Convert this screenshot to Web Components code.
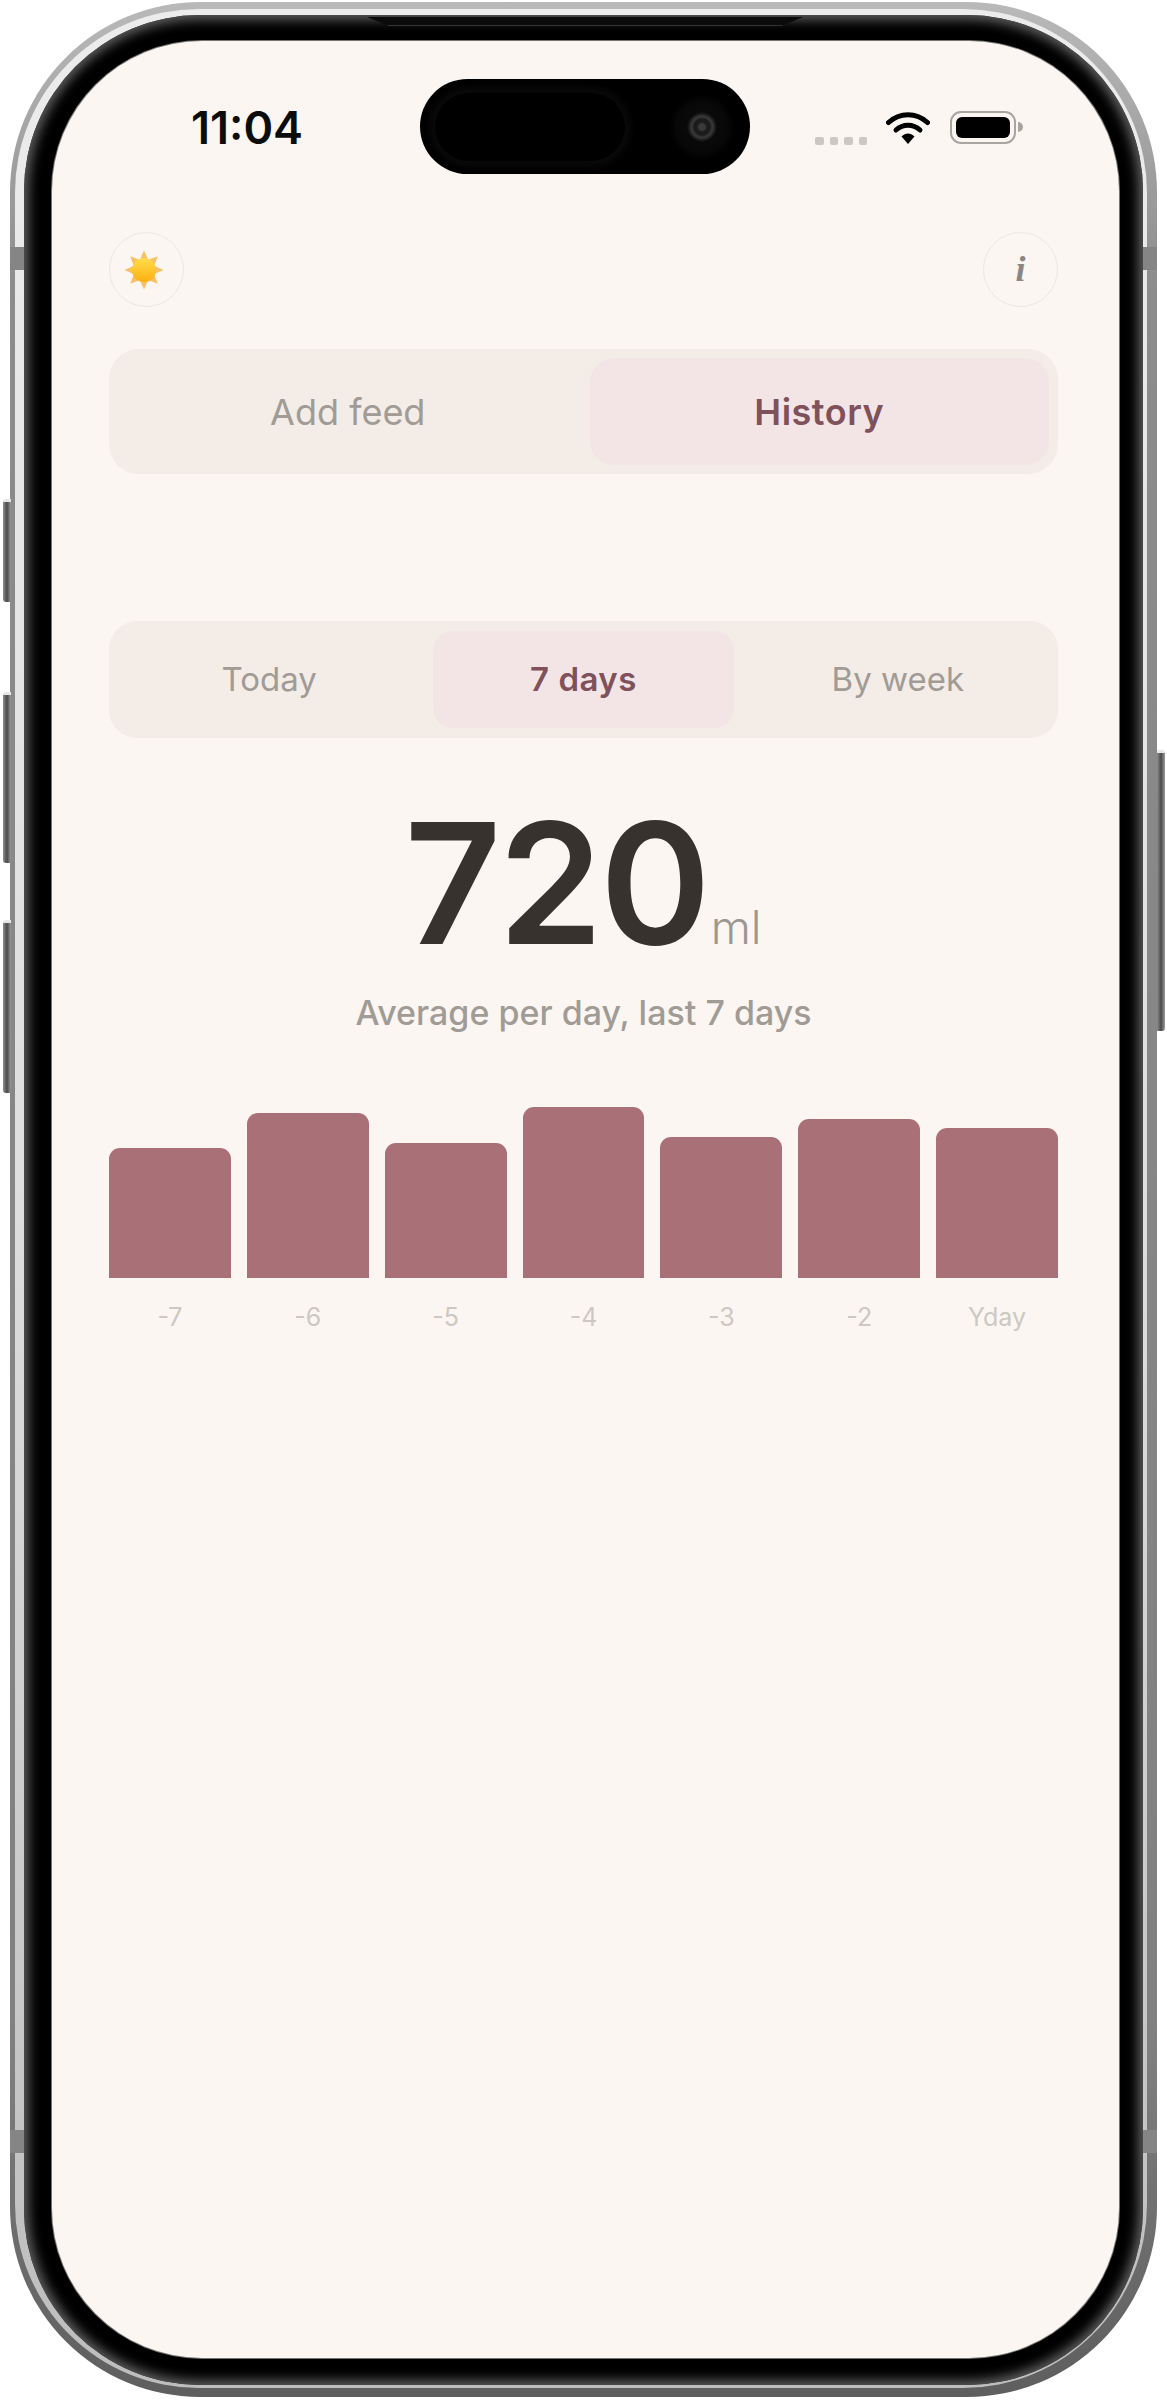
<!doctype html>
<html lang="en">
<head>
<meta charset="utf-8">
<title>Feed history</title>
<style>
  html, body { margin: 0; background: #fff; }
  body { font-family: Inter, "Noto Sans", sans-serif; }
</style>
</head>
<body>
<phone-frame>
  <status-bar time="11:04"></status-bar>
  <app-toolbar></app-toolbar>
  <segment-control variant="large" items="Add feed|History" active="1"></segment-control>
  <segment-control variant="small" items="Today|7 days|By week" active="1"></segment-control>
  <stat-readout value="720" unit="ml" caption="Average per day, last 7 days"></stat-readout>
  <bar-chart data="-7:130,-6:165,-5:135,-4:171,-3:141,-2:159,Yday:150"></bar-chart>
</phone-frame>

<script>
// every element sets its shadow root once, from its attributes
class Base extends HTMLElement {
  connectedCallback() {
    if (this.shadowRoot) return
    this.attachShadow({ mode: 'open' })
    this.shadowRoot.innerHTML = this.html()
  }
  attr(name, fallback = '') {
    return this.getAttribute(name) ?? fallback
  }
}

class PhoneFrame extends Base {
  html() {
    return `
      <style>
        :host { display: block; position: relative; width: 1147px; height: 2395px; margin: 2px 0 0 10px; }
        .rim {
          box-sizing: border-box; height: 100%;
          padding: 7px 10px 9px 5px;
          border-radius: 190px;
          background: linear-gradient(#b9b9b9, #8c8c8c 12%, #808080 85%, #5e5e5e);
        }
        .shine {
          box-sizing: border-box; height: 100%;
          padding: 6px 4px 3px 9px;
          border-radius: 184px;
          background: linear-gradient(#ececec, #dedede 50%, #bdbdbd);
        }
        .bezel {
          box-sizing: border-box; height: 100%;
          padding: 26px 24px 27px 28px;
          border-radius: 176px;
          background: #000;
          box-shadow: inset 0 0 11px 5px #5c5c5c;
        }
        .screen {
          box-sizing: border-box; height: 100%;
          padding: 0 61px 0 57px;
          border-radius: 150px;
          background: #fbf6f1;
          box-shadow: 0 0 0 1px #77736f;
          overflow: hidden;
        }
        .btn {
          position: absolute; width: 8px;
          background: linear-gradient(90deg, #8d8d8d, #4a4a4a 50%, #9a9a9a);
          border-top: 3px solid #e6e6e6;
          border-radius: 3px 0 0 3px;
        }
        .btn.left { left: -7px; }
        .btn.right { right: -8px; border-radius: 0 3px 3px 0; }
        .btn.mute { top: 497px; height: 100px; }
        .btn.up { top: 690px; height: 168px; }
        .btn.down { top: 918px; height: 170px; }
        .btn.power { top: 748px; height: 278px; }
        .band { position: absolute; height: 23px; width: 14px; background: #858585; }
        .notch {
          position: absolute; left: 357px; top: 15px; width: 436px; height: 8px;
          background: #0b0b0b;
          clip-path: polygon(0 0, 100% 0, 95% 100%, 5% 100%);
          border-bottom: 1px solid #333;
        }
      </style>
      <div class="btn left mute"></div>
      <div class="btn left up"></div>
      <div class="btn left down"></div>
      <div class="btn right power"></div>
      <div class="rim"><div class="shine"><div class="bezel"><div class="screen"><slot></slot></div></div></div></div>
      <div class="band" style="left:0;top:245px"></div>
      <div class="band" style="left:0;top:2128px"></div>
      <div class="band" style="right:0;top:245px"></div>
      <div class="band" style="right:0;top:2128px"></div>
      <div class="notch"></div>`
  }
}

class StatusBar extends Base {
  html() {
    return `
      <style>
        :host { display: block; position: relative; height: 191px; }
        .row {
          display: flex; align-items: flex-start;
          padding: 65px 0 0 82px;
        }
        .time { font: 600 45px/44px Inter, sans-serif; color: #0c0c0c; }
        .right { margin-left: auto; margin-right: 35px; display: flex; align-items: flex-start; }
        .dots { display: flex; gap: 6px; margin-top: 31px; }
        .dots i { width: 8.5px; height: 8px; border-radius: 2px; background: #cbc7c3; }
        .wifi { display: block; margin: 5px 0 0 19px; }
        .batt {
          box-sizing: border-box; width: 66px; height: 33px; margin: 5px 0 0 20px; padding: 4px;
          border: 2px solid #a8a5a1; border-radius: 11px;
        }
        .batt b { display: block; height: 100%; background: #000; border-radius: 6px; }
        .nub { width: 5px; height: 10px; margin: 16px 0 0 2px; background: #a8a5a1; border-radius: 0 5px 5px 0; }
        .island {
          position: absolute; left: 0; right: 0; top: 38px;
          width: 330px; height: 95px; margin-left: 311px;
          display: flex; align-items: center; justify-content: space-between;
          box-sizing: border-box; padding: 0 18px 0 15px;
          background: #000; border-radius: 48px;
        }
        .sensor { width: 190px; height: 68px; border-radius: 34px; box-shadow: 0 0 6px 6px #090909; }
        .cam {
          width: 30px; height: 30px; border-radius: 50%;
          background: radial-gradient(circle, #3a3a3a 0 3px, #1c1c1c 5px 8px, #363636 10px 11px, #111 14px);
          box-shadow: 0 0 6px 14px #090909;
          margin-right: 15px;
        }
      </style>
      <div class="row">
        <span class="time">${this.attr('time')}</span>
        <div class="right">
          <div class="dots"><i></i><i></i><i></i><i></i></div>
          <svg class="wifi" width="44" height="33" viewBox="0 0 44 33" fill="none">
            <path d="M2.5 11.5C13.5 1 30.5 1 41.5 11.5" stroke="#000" stroke-width="5" stroke-linecap="round"/>
            <path d="M10 19C17 12.5 27 12.5 34 19" stroke="#000" stroke-width="5" stroke-linecap="round"/>
            <path d="M15.5 25.5C19.5 21.6 24.5 21.6 28.5 25.5L22 33Z" fill="#000"/>
          </svg>
          <div class="batt"><b></b></div>
          <div class="nub"></div>
        </div>
      </div>
      <div class="island"><div class="sensor"></div><div class="cam"></div></div>`
  }
}

class AppToolbar extends Base {
  html() {
    const rays = Array.from({ length: 8 }, (_, i) =>
      `<path d="M20 0.5l4 9h-8z" fill="#f7bf66" transform="rotate(${i * 45} 20 20)"/>`).join('')
    return `
      <style>
        :host { display: flex; justify-content: space-between; height: 75px; margin-bottom: 42px; }
        .round {
          box-sizing: border-box; width: 75px; height: 75px; border-radius: 50%;
          border: 1.5px solid #ebe6e2;
          display: flex; align-items: center; justify-content: center;
        }
        svg { display: block; margin-right: 5px; }
        .i { font: italic 700 36px/1 "Liberation Serif", serif; color: #8b8682; margin-top: -2px; }
      </style>
      <div class="round">
        <svg width="40" height="40" viewBox="0 0 40 40">
          <defs>
            <linearGradient id="core" x1="0" y1="0" x2="0" y2="1">
              <stop offset="0" stop-color="#ffdc4e"/><stop offset="1" stop-color="#fdb010"/>
            </linearGradient>
          </defs>
          ${rays}
          <circle cx="20" cy="20" r="12" fill="url(#core)"/>
        </svg>
      </div>
      <div class="round"><span class="i">i</span></div>`
  }
}

class SegmentControl extends Base {
  html() {
    const items = this.attr('items').split('|')
    const active = Number(this.attr('active', 0))
    const large = this.attr('variant') === 'large'
    const cells = items.map((t, i) =>
      `<div class="seg${i === active ? ' on' : ''}">${t}</div>`).join('')
    return `
      <style>
        :host {
          display: grid; grid-template-columns: repeat(${items.length}, 1fr);
          box-sizing: border-box;
          height: ${large ? 125 : 117}px;
          margin-bottom: ${large ? 147 : 69}px;
          padding: ${large ? '9px' : '10px'};
          gap: ${large ? 12 : 14}px;
          border-radius: ${large ? 30 : 28}px;
          background: #f3ece7;
        }
        .seg {
          display: flex; align-items: center; justify-content: center;
          border-radius: ${large ? 24 : 20}px;
          font: 400 ${large ? 36 : 33}px/1 Inter, sans-serif;
          color: #a19b96;
        }
        .on { background: #f3e5e6; color: #7f515b; font-weight: 600; letter-spacing: 0.5px; }
      </style>
      ${cells}`
  }
}

class StatReadout extends Base {
  html() {
    return `
      <style>
        :host { display: block; text-align: center; margin-bottom: 49px; }
        .top { display: flex; justify-content: center; align-items: baseline; height: 152px; padding-right: 1px; }
        .num { font: 600 168px/152px Inter, sans-serif; letter-spacing: -3px; color: #38322e; }
        .unit { font: 300 46px/1 Inter, sans-serif; color: #9d9792; margin-left: 3px; }
        .cap { margin-top: 34px; font: 500 34px/40px Inter, sans-serif; color: #a19b96; }
      </style>
      <div class="top"><span class="num">${this.attr('value')}</span><span class="unit">${this.attr('unit')}</span></div>
      <div class="cap">${this.attr('caption')}</div>`
  }
}

class BarChart extends Base {
  html() {
    const cols = this.attr('data').split(',').map(d => {
      const [label, h] = d.split(':')
      return `<div class="col"><div class="bar" style="height:${h}px"></div><div class="lab">${label}</div></div>`
    }).join('')
    return `
      <style>
        :host { display: grid; grid-template-columns: repeat(7, 1fr); gap: 16px; padding-top: 25px; }
        .col { display: flex; flex-direction: column; justify-content: flex-end; min-width: 0; }
        .bar { background: #a97078; border-radius: 11px 11px 0 0; }
        .lab { margin-top: 25px; text-align: center; font: 400 25px/28px Inter, sans-serif; color: #cdc8c3; }
      </style>
      ${cols}`
  }
}

customElements.define('phone-frame', PhoneFrame)
customElements.define('status-bar', StatusBar)
customElements.define('app-toolbar', AppToolbar)
customElements.define('segment-control', SegmentControl)
customElements.define('stat-readout', StatReadout)
customElements.define('bar-chart', BarChart)
</script>
</body>
</html>
